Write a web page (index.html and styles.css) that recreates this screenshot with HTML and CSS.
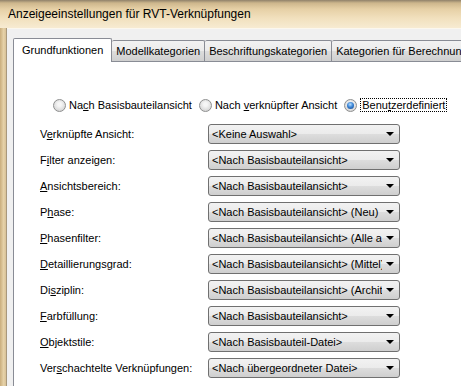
FILE: index.html
```html
<!DOCTYPE html>
<html lang="de">
<head>
  <meta charset="UTF-8">
  <title>Anzeigeeinstellungen für RVT-Verknüpfungen</title>
  <link rel="stylesheet" href="styles.css">
</head>
<body>
  <div class="window">
    <div class="titlebar">Anzeigeeinstellungen für RVT-Verknüpfungen</div>
    <div class="frame">
      <div class="edge"></div>
      <div class="body">
        <div class="tabs">
          <div class="tab active">Grundfunktionen</div>
          <div class="tab">Modellkategorien</div>
          <div class="tab">Beschriftungskategorien</div>
          <div class="tab">Kategorien für Berechnung</div>
        </div>
        <div class="panel">
          <div class="radios">
            <label class="radio"><span class="dot"></span><span>Na<u>c</u>h Basisbauteilansicht</span></label>
            <label class="radio"><span class="dot"></span><span>Nach <u>v</u>erknüpfter Ansicht</span></label>
            <label class="radio checked"><span class="dot"></span><span class="focus">Benu<u>t</u>zerdefiniert</span></label>
          </div>
          <div class="rows">
            <div class="label">V<u>e</u>rknüpfte Ansicht:</div>
            <div class="combo"><span class="value">&lt;Keine Auswahl&gt;</span><span class="arrow"></span></div>

            <div class="label">F<u>i</u>lter anzeigen:</div>
            <div class="combo"><span class="value">&lt;Nach Basisbauteilansicht&gt;</span><span class="arrow"></span></div>

            <div class="label"><u>A</u>nsichtsbereich:</div>
            <div class="combo"><span class="value">&lt;Nach Basisbauteilansicht&gt;</span><span class="arrow"></span></div>

            <div class="label">P<u>h</u>ase:</div>
            <div class="combo"><span class="value">&lt;Nach Basisbauteilansicht&gt; (Neu)</span><span class="arrow"></span></div>

            <div class="label"><u>P</u>hasenfilter:</div>
            <div class="combo"><span class="value">&lt;Nach Basisbauteilansicht&gt; (Alle anzeigen)</span><span class="arrow"></span></div>

            <div class="label"><u>D</u>etaillierungsgrad:</div>
            <div class="combo"><span class="value">&lt;Nach Basisbauteilansicht&gt; (Mittel)</span><span class="arrow"></span></div>

            <div class="label">Di<u>s</u>ziplin:</div>
            <div class="combo"><span class="value">&lt;Nach Basisbauteilansicht&gt; (Architektur)</span><span class="arrow"></span></div>

            <div class="label"><u>F</u>arbfüllung:</div>
            <div class="combo"><span class="value">&lt;Nach Basisbauteilansicht&gt;</span><span class="arrow"></span></div>

            <div class="label"><u>O</u>bjektstile:</div>
            <div class="combo"><span class="value">&lt;Nach Basisbauteil-Datei&gt;</span><span class="arrow"></span></div>

            <div class="label">Ver<u>s</u>chachtelte Verknüpfungen:</div>
            <div class="combo"><span class="value">&lt;Nach übergeordneter Datei&gt;</span><span class="arrow"></span></div>
          </div>
        </div>
      </div>
    </div>
  </div>
</body>
</html>
```

FILE: styles.css
```css
body {
  margin: 0;
  background: #f0f0f0;
  font-family: "Liberation Sans", Arial, sans-serif;
  font-size: 11px;
  color: #000;
}
.window {
  width: 461px;
  height: 386px;
  overflow: hidden;
  display: flex;
  flex-direction: column;
}
.titlebar {
  height: 28px;
  flex: none;
  box-sizing: border-box;
  padding: 7px 0 0 8px;
  font-size: 12px;
  white-space: nowrap;
  background: linear-gradient(#8f816a 0, #cdb68c 3px, #e6d0a6 9px, #f1e0bd 18px, #f7ebd2 28px);
}
.frame {
  flex: 1;
  display: flex;
}
.edge {
  width: 6px;
  flex: none;
  background: linear-gradient(90deg, #c9ad7c, #e6d2a8 60%, #d8c197);
  border-right: 1px solid #a8987c;
}
.body {
  flex: 1;
  min-width: 0;
  padding: 9px 0 0 6px;
  background: #f0f0f0;
  border-top: 1px solid #fbf7ee;
}
.tabs {
  display: flex;
  align-items: flex-end;
  white-space: nowrap;
  position: relative;
  z-index: 1;
}
.tab {
  height: 20px;
  line-height: 20px;
  padding: 0 4px;
  border: 1px solid #898c95;
  border-bottom: none;
  border-left: none;
  border-radius: 2px 2px 0 0;
  background: linear-gradient(#f2f2f2, #ebebeb 50%, #dddddd 50%, #cfcfcf);
}
.tab.active {
  height: 23px;
  line-height: 22px;
  padding: 0 8px;
  border-left: 1px solid #898c95;
  background: #fff;
  margin-bottom: -1px;
}
.panel {
  background: #fff;
  border: 1px solid #898c95;
  border-right: none;
  height: 400px;
  padding: 35px 0 0 26px;
}
.radios {
  display: flex;
  gap: 4px;
  padding-left: 13px;
  height: 16px;
  align-items: center;
  white-space: nowrap;
  margin-bottom: 11px;
}
.radio {
  display: flex;
  align-items: center;
  gap: 3px;
  margin-right: 3px;
}
.dot {
  width: 11px;
  height: 11px;
  border: 1px solid #8e8f8f;
  border-radius: 50%;
  background: radial-gradient(circle at 50% 40%, #f6f6f6 20%, #d4d4d4 80%);
  position: relative;
}
.radio.checked .dot::after {
  content: "";
  position: absolute;
  left: 2px;
  top: 2px;
  width: 7px;
  height: 7px;
  border-radius: 50%;
  background: radial-gradient(circle at 45% 35%, #b9e0ff 0, #3d86d6 45%, #0d3d82 100%);
}
.focus {
  border: 1px dotted #000;
  padding: 0 1px;
}
.rows {
  display: grid;
  grid-template-columns: 168px 192px;
  grid-auto-rows: 20px;
  row-gap: 6px;
  align-items: center;
}
.label {
  white-space: nowrap;
}
.combo {
  height: 20px;
  box-sizing: border-box;
  border: 1px solid #707070;
  border-radius: 3px;
  background: linear-gradient(#f2f2f2, #ebebeb 50%, #dddddd 50%, #cfcfcf);
  display: flex;
  align-items: center;
}
.value {
  flex: 1;
  min-width: 0;
  overflow: hidden;
  white-space: nowrap;
  padding-left: 3px;
}
.arrow {
  width: 0;
  height: 0;
  margin: 0 5px 0 4px;
  border-left: 4px solid transparent;
  border-right: 4px solid transparent;
  border-top: 4px solid #000;
}
```
